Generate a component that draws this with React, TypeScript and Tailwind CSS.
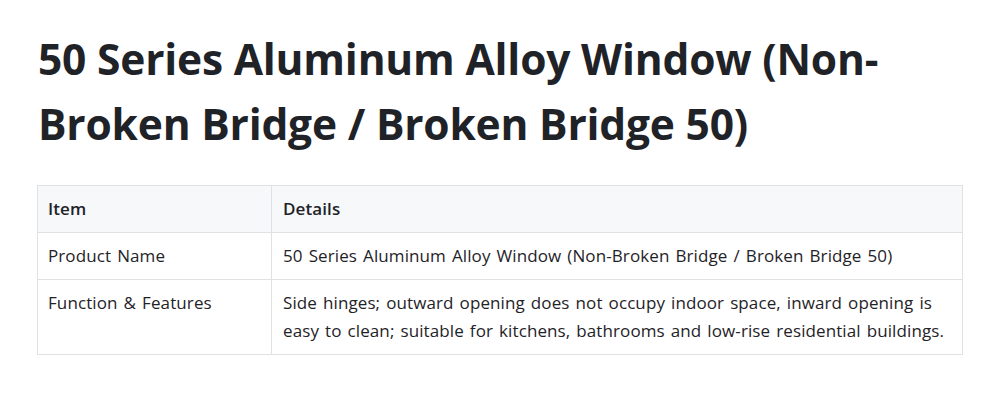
const rows = [
  {
    item: "Product Name",
    details: "50 Series Aluminum Alloy Window (Non-Broken Bridge / Broken Bridge 50)",
  },
  {
    item: "Function & Features",
    details:
      "Side hinges; outward opening does not occupy indoor space, inward opening is easy to clean; suitable for kitchens, bathrooms and low-rise residential buildings.",
  },
];

export default function App() {
  return (
    <div className="min-h-[403px] bg-white px-[37px] pt-[26px] font-['Open_Sans',sans-serif] text-[#1f2328]">
      <h1 className="pl-px text-[42.5px] font-bold leading-[65px] tracking-[-0.2px]">
        50 Series Aluminum Alloy Window (Non-Broken Bridge / Broken Bridge 50)
      </h1>
      <table className="mt-[29px] w-full border-collapse text-[17px] leading-[28px] tracking-[0.1px] [word-spacing:1.5px]">
        <thead>
          <tr className="bg-[#f6f8fa]">
            <th className="w-[234px] border border-[#dfe2e5] px-[10px] py-[9px] text-left font-semibold">
              Item
            </th>
            <th className="border border-[#dfe2e5] py-[9px] pl-[11px] pr-[6px] text-left font-semibold">
              Details
            </th>
          </tr>
        </thead>
        <tbody>
          {rows.map((r) => (
            <tr key={r.item}>
              <td className="border border-[#dfe2e5] px-[10px] py-[9px] align-top">{r.item}</td>
              <td className="border border-[#dfe2e5] py-[9px] pl-[11px] pr-[6px] align-top">{r.details}</td>
            </tr>
          ))}
        </tbody>
      </table>
    </div>
  );
}
